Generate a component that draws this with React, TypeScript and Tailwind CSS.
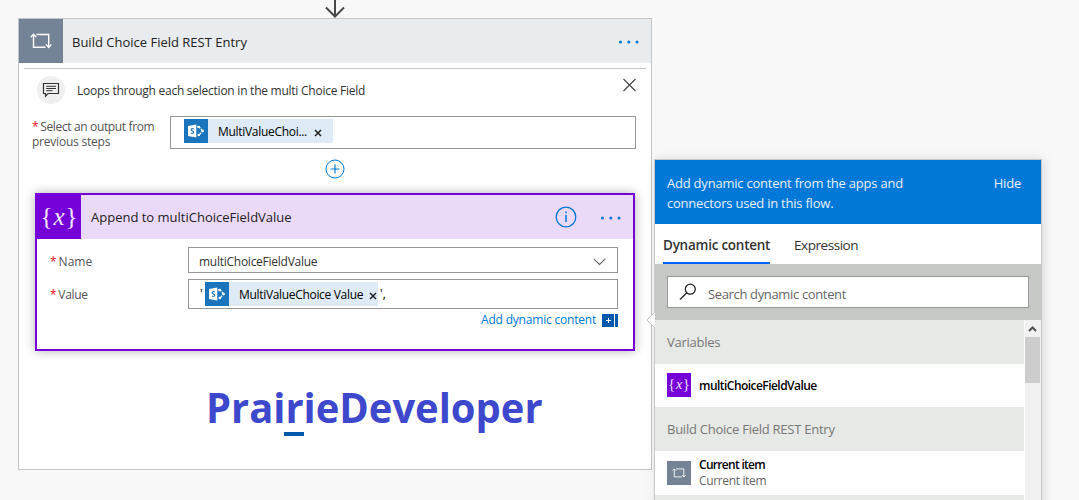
import React from 'react';

const LoopIcon = ({ className }: { className?: string }) => (
  <svg viewBox="0 0 22 16" className={className} fill="none" stroke="white" strokeWidth="1.4">
    <path d="M3.5 1.5V14.2H15.5M6.5 1.5H18.7V14" />
    <path d="M0.8 4.3L3.5 1.3L6.2 4.3M16 11.4L18.7 14.4L21.4 11.4" />
  </svg>
);

const VariableIcon = ({ className }: { className?: string }) => (
  <span className={`flex items-center justify-center whitespace-nowrap bg-[#7500d8] font-['Liberation_Serif',serif] text-[#f3e6ff] ${className}`}>
    {'{'}
    <i>x</i>
    {'}'}
  </span>
);

const SharePointIcon = () => (
  <span className="flex size-6 shrink-0 items-center justify-center bg-[#1b75bc]">
    <svg width="24" height="24" viewBox="0 0 24 24">
      <path d="M13 7.8H15L18.7 12L15 16.2H13" fill="none" stroke="white" strokeWidth="1.3" strokeDasharray="4 1" />
      <circle cx="14.8" cy="8" r="1.2" fill="white" />
      <circle cx="18.6" cy="12" r="1.3" fill="white" />
      <circle cx="14.8" cy="16" r="1.2" fill="white" />
      <path d="M4 6.9L12.3 5.6V18.4L4 17.1Z" fill="white" />
      <path d="M9.8 10C8.5 9.3 7.1 9.6 7.1 10.6C7.1 12 9.7 11.8 9.7 13.2C9.7 14.4 8.2 14.5 6.9 13.9" fill="none" stroke="#1b75bc" strokeWidth="1.1" />
    </svg>
  </span>
);

const Ellipsis = () => (
  <svg width="22" height="4" viewBox="0 0 22 4" fill="#0078d7">
    <circle cx="2.5" cy="2" r="1.5" />
    <circle cx="10.8" cy="2" r="1.5" />
    <circle cx="19" cy="2" r="1.5" />
  </svg>
);

const SmallX = () => (
  <svg width="8" height="8" viewBox="0 0 8 8" stroke="#222" strokeWidth="1.5">
    <path d="M1 1L7 7M7 1L1 7" />
  </svg>
);

const Section = ({ children }: { children: React.ReactNode }) => (
  <div className="flex h-[43.5px] shrink-0 items-center bg-[#e7e9e6] pt-[2px] pl-3 text-[13px] tracking-[-0.25px] text-[#777]">{children}</div>
);

const AppendCard = () => (
  <div className="mt-[14px] ml-4 h-[158px] w-[600px] border-2 border-[#7500d8] bg-white shadow-[0_0_10px_rgba(0,0,0,0.3)]">
    <div className="flex h-11 items-center bg-[#ebd9f9]">
      <VariableIcon className="size-11 gap-px pb-px text-[25px]" />
      <span className="ml-[10px] pt-[2px] text-[13px] text-[#222]">Append to multiChoiceFieldValue</span>
      <svg className="ml-auto" width="22" height="22" viewBox="0 0 22 22" fill="none" stroke="#0078d7" strokeWidth="1.3">
        <circle cx="11" cy="11" r="9.8" />
        <path d="M11 9V16M11 5.5V7.3" strokeWidth="1.5" />
      </svg>
      <div className="mr-[11px] ml-[23px] pt-[2px]">
        <Ellipsis />
      </div>
    </div>
    <div className="mt-2 mr-[15px] flex h-[26px] items-center">
      <span className="w-[151px] pt-[3px] pl-[13px] text-[12px] text-[#555]">
        <span className="mr-[2px] text-[#e81123]">*</span>Name
      </span>
      <div className="flex h-[26px] flex-1 items-center justify-between border border-[#979797] pr-[11px] pl-[10px] text-[12px] text-[#333]">
        <span className="pt-[3px] tracking-[-0.26px]">multiChoiceFieldValue</span>
        <svg className="mt-[3px]" width="13" height="8" viewBox="0 0 13 8" fill="none" stroke="#666" strokeWidth="1.1">
          <path d="M0.8 0.8L6.5 6.5L12.2 0.8" />
        </svg>
      </div>
    </div>
    <div className="mt-[6px] mr-[15px] flex h-[30px] items-center">
      <span className="w-[151px] pt-[2px] pl-[13px] text-[12px] tracking-[-0.3px] text-[#555]">
        <span className="mr-[2px] text-[#e81123]">*</span>Value
      </span>
      <div className="flex h-[30px] flex-1 items-center border border-[#979797] pl-[11px] text-[12px] text-black">
        <span className="w-[5px]">'</span>
        <div className="flex h-6 w-[173px] items-center bg-[#deebf6]">
          <SharePointIcon />
          <span className="ml-[10px] w-[130px] pt-[2px] tracking-[-0.32px] whitespace-nowrap">MultiValueChoice Value</span>
          <div className="pt-1"><SmallX /></div>
        </div>
        <span className="ml-[2px]">',</span>
      </div>
    </div>
    <div className="mt-[3px] mr-[15px] flex h-4 items-center justify-end text-[12px] text-[#0078d7]">
      <span className="tracking-[-0.2px]">Add dynamic content</span>
      <svg className="ml-[6px]" width="16" height="13" viewBox="0 0 16 13">
        <path d="M0 0H12V13H0ZM13 0H16V13H13Z" fill="#0058ad" />
        <path d="M6.5 4V9M4 6.5H9" stroke="white" />
      </svg>
    </div>
  </div>
);

const LoopCard = () => (
  <div className="h-[452px] w-[634px] border border-[#c5c5c5] bg-white">
    <div className="flex h-11 items-center bg-[#e9ecee]">
      <div className="flex size-11 items-center justify-center bg-[#748395]">
        <LoopIcon className="h-4 w-[22px]" />
      </div>
      <span className="ml-[9px] pt-[3px] text-[13px] text-[#222]">Build Choice Field REST Entry</span>
      <div className="mr-[11px] ml-auto pt-[2px]">
        <Ellipsis />
      </div>
    </div>
    <div className="mx-[5px] mt-[5px] h-px bg-[#c8c8c8]" />
    <div className="mt-[7px] flex h-7 items-center pl-[18px]">
      <div className="flex size-7 items-center justify-center rounded-full bg-[#f0f0f0]">
        <svg width="18" height="16" viewBox="0 0 18 16" fill="none" stroke="#333" strokeWidth="1.2">
          <path d="M1.5 1.5H16.5V11.5H6L3.5 14.3V11.5H1.5Z" />
          <path d="M4.2 4.3H14M4.2 6.5H14M4.2 8.7H10.5" strokeWidth="1" />
        </svg>
      </div>
      <span className="ml-3 pt-[2px] text-[12px] tracking-[-0.25px] text-[#333]">Loops through each selection in the multi Choice Field</span>
      <svg className="mr-[15px] mb-[10px] ml-auto" width="14" height="14" viewBox="0 0 14 14" stroke="#444" strokeWidth="1.1">
        <path d="M1.5 1L13.5 13M13.5 1L1.5 13" />
      </svg>
    </div>
    <div className="mt-3 flex h-[33px]">
      <div className="w-[151px] pt-[3px] pl-[13px] text-[12px] leading-[15px] tracking-[-0.36px] whitespace-nowrap text-[#555]">
        <span className="mr-[2px] text-[#e81123]">*</span>Select an output from
        <br />
        <span className="tracking-[-0.22px]">previous steps</span>
      </div>
      <div className="flex w-[466px] border border-[#979797] pt-[2px] pl-[13px] text-[12px] text-black">
        <div className="flex h-6 w-[149px] items-center bg-[#deebf6]">
          <SharePointIcon />
          <span className="ml-[10px] w-[96px] pt-[2px] tracking-[-0.3px] whitespace-nowrap">MultiValueChoi...</span>
          <div className="pt-1"><SmallX /></div>
        </div>
      </div>
    </div>
    <div className="mt-[10px] flex h-5 justify-center">
      <svg width="20" height="20" viewBox="0 0 20 20" fill="none" stroke="#0078d7">
        <circle cx="10" cy="10" r="9" />
        <path d="M10 5.5V14.5M5.5 10H14.5" strokeWidth="1.2" />
      </svg>
    </div>
    <AppendCard />
    <div className="mt-[31px] ml-[187px] w-fit origin-left scale-x-[0.95] text-[42px] leading-[50px] font-bold text-[#3d48cc]">
      PrairieDeveloper
    </div>
    <div className="ml-[265px] h-1 w-5 bg-[#0058ad]" />
  </div>
);

const DynamicContentPanel = () => (
  <div className="relative mt-[141px] ml-[2px] flex h-[360px] w-[388px] flex-col border border-[#c8c8c8] bg-white shadow-[2px_0_10px_rgba(0,0,0,0.12)]">
    <svg className="absolute top-[152px] -left-[9px]" width="9" height="16" viewBox="0 0 9 16">
      <path d="M9 0L1 8L9 16" fill="white" stroke="#c8c8c8" />
    </svg>
    <div className="flex h-16 shrink-0 justify-between bg-[#0078d7] pt-[13px] pr-5 pl-3 text-[13px] leading-5 text-[#e5f1fb]">
      <div className="tracking-[-0.22px]">
        Add dynamic content from the apps and
        <br />
        connectors used in this flow.
      </div>
      <span className="tracking-[-0.2px]">Hide</span>
    </div>
    <div className="flex h-10 shrink-0 gap-6 pl-2 text-[13.5px] leading-[42px] text-[#333]">
      <span className="h-10 w-[107px] border-b-2 border-[#0062f5] font-semibold tracking-[-0.25px] whitespace-nowrap">Dynamic content</span>
      <span className="tracking-[-0.45px]">Expression</span>
    </div>
    <div className="h-14 shrink-0 bg-[#c7c9c7] px-3 pt-3">
      <div className="flex h-8 items-center border border-[#999] bg-white pl-[11px]">
        <svg width="18" height="18" viewBox="0 0 18 18" fill="none" stroke="#222" strokeWidth="1.3">
          <circle cx="11.3" cy="6.2" r="5" />
          <path d="M7.8 9.8L1 16.5" />
        </svg>
        <span className="ml-[11px] pt-[5px] text-[13px] tracking-[-0.35px] text-[#666]">Search dynamic content</span>
      </div>
    </div>
    <div className="flex min-h-0 flex-1">
      <div className="flex w-[369px] flex-col overflow-hidden">
        <Section>Variables</Section>
        <div className="flex h-[43.5px] shrink-0 items-center pl-3">
          <VariableIcon className="size-6 gap-px pb-[2px] text-[14px]" />
          <span className="ml-2 pt-[2px] text-[12px] font-semibold tracking-[-0.54px] text-black">multiChoiceFieldValue</span>
        </div>
        <Section>Build Choice Field REST Entry</Section>
        <div className="flex h-11 shrink-0 items-center pl-3">
          <div className="flex size-6 items-center justify-center bg-[#748395]">
            <LoopIcon className="h-[10px] w-[14px]" />
          </div>
          <div className="ml-2 pt-px text-[12px] leading-4">
            <div className="font-semibold tracking-[-0.7px] text-black">Current item</div>
            <div className="tracking-[-0.35px] text-[#666]">Current item</div>
          </div>
        </div>
        <Section>{null}</Section>
      </div>
      <div className="ml-px w-4 bg-[#f1f1f1]">
        <svg width="15" height="17" viewBox="0 0 15 17" fill="none" stroke="#505050" strokeWidth="2">
          <path d="M4 11L7.5 7.5L11 11" />
        </svg>
        <div className="h-[46px] w-[15px] bg-[#cdcdcd]" />
      </div>
    </div>
  </div>
);

export default function App() {
  return (
    <div className="relative h-[500px] w-[1079px] overflow-hidden bg-[#f8f8f8] font-['Open_Sans','Noto_Sans',sans-serif]">
      {/* Connector arrow from the previous step */}
      <svg className="absolute top-0 left-[325px]" width="20" height="18" viewBox="0 0 20 18" fill="none" stroke="#484848" strokeWidth="2">
        <path d="M10 0V16M1 7.5L10 16.5L19 7.5" />
      </svg>
      <div className="flex pl-[18px]">
        <div className="pt-[18px]">
          <LoopCard />
        </div>
        <div className="pt-[18px]">
          <DynamicContentPanel />
        </div>
      </div>
    </div>
  );
}
